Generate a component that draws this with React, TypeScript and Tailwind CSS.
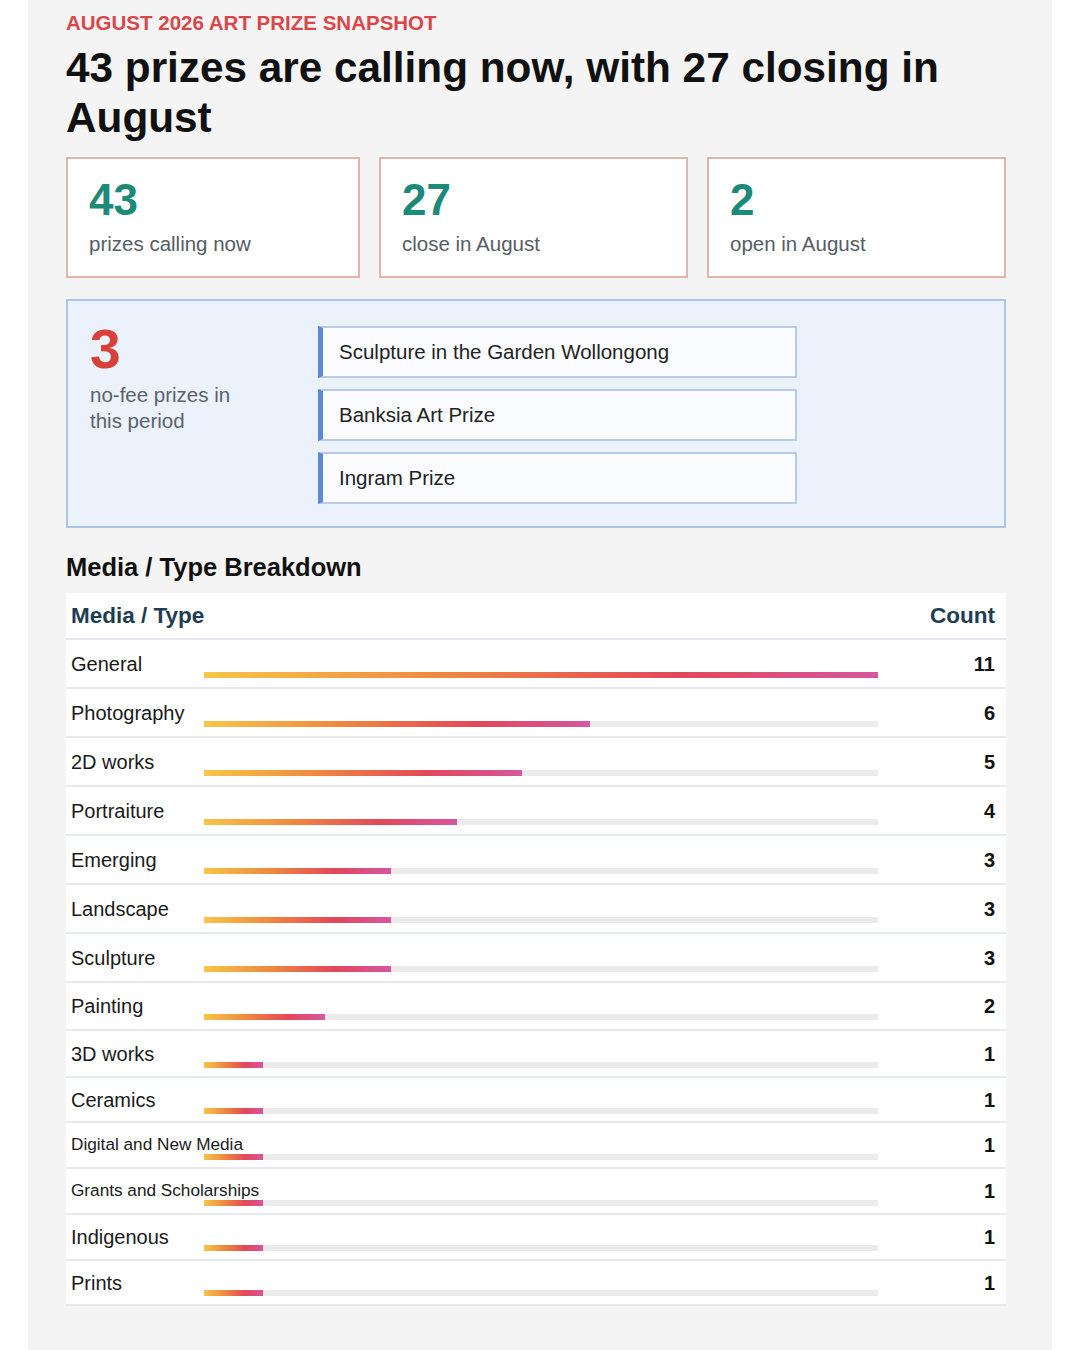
const stats = [
  { value: "43", label: "prizes calling now", width: "w-[294px]" },
  { value: "27", label: "close in August", width: "w-[309px]" },
  { value: "2", label: "open in August", width: "flex-1" },
];

const noFee = ["Sculpture in the Garden Wollongong", "Banksia Art Prize", "Ingram Prize"];

type Row = { label: string; count: number; bar: number; h: string; pb: string; small?: boolean };

const rows: Row[] = [
  { label: "General", count: 11, bar: 674, h: "h-[49px]", pb: "pb-[9px]" },
  { label: "Photography", count: 6, bar: 386, h: "h-[49px]", pb: "pb-[9px]" },
  { label: "2D works", count: 5, bar: 318, h: "h-[49px]", pb: "pb-[9px]" },
  { label: "Portraiture", count: 4, bar: 253, h: "h-[49px]", pb: "pb-[9px]" },
  { label: "Emerging", count: 3, bar: 187, h: "h-[49px]", pb: "pb-[9px]" },
  { label: "Landscape", count: 3, bar: 187, h: "h-[49px]", pb: "pb-[9px]" },
  { label: "Sculpture", count: 3, bar: 187, h: "h-[49px]", pb: "pb-[9px]" },
  { label: "Painting", count: 2, bar: 121, h: "h-[48px]", pb: "pb-[9px]" },
  { label: "3D works", count: 1, bar: 59, h: "h-[47px]", pb: "pb-[8px]" },
  { label: "Ceramics", count: 1, bar: 59, h: "h-[45px]", pb: "pb-[7px]" },
  { label: "Digital and New Media", count: 1, bar: 59, h: "h-[46px]", pb: "pb-[7px]", small: true },
  { label: "Grants and Scholarships", count: 1, bar: 59, h: "h-[46px]", pb: "pb-[7px]", small: true },
  { label: "Indigenous", count: 1, bar: 59, h: "h-[46px]", pb: "pb-[8px]" },
  { label: "Prints", count: 1, bar: 59, h: "h-[45px]", pb: "pb-[8px]" },
];

const barFill = "linear-gradient(to right, #f7c548, #f0893f 35%, #e2475a 70%, #d6579e)";

export default function App() {
  return (
    <div className="min-h-[1350px] bg-white px-[28px] font-['Liberation_Sans',Arial,sans-serif]">
      <div className="min-h-[1350px] bg-[#f4f4f4] pl-[38px] pr-[46px] pt-[11px]">
        {/* Eyebrow + title */}
        <p className="text-[20.5px] font-bold uppercase leading-[24px] text-[#d8474a]">
          August 2026 Art Prize Snapshot
        </p>
        <h1 className="mt-[8px] text-[42.3px] font-bold leading-[50px] text-[#111]">
          43 prizes are calling now, with 27 closing in August
        </h1>

        {/* Stat cards */}
        <div className="mt-[14px] flex gap-[19px]">
          {stats.map((s) => (
            <div
              key={s.value}
              className={`${s.width} h-[121px] border-2 border-[#e0b4ac] bg-white px-[21px] pt-[19px]`}
            >
              <div className="text-[44px] font-bold leading-[44px] text-[#1b8a79]">{s.value}</div>
              <div className="mt-[10px] text-[20.5px] leading-[24px] text-[#565d66]">{s.label}</div>
            </div>
          ))}
        </div>

        {/* No-fee box */}
        <div className="mt-[21px] flex h-[229px] border-2 border-[#adc4ea] bg-[#ebf2fc] pl-[22px] pt-[21px]">
          <div className="w-[228px] shrink-0">
            <div className="text-[55px] font-bold leading-[55px] text-[#d8403a]">3</div>
            <p className="mt-[5px] w-[150px] text-[20.5px] leading-[26px] text-[#5b626b]">
              no-fee prizes in this period
            </p>
          </div>
          <div className="mt-[4px] flex w-[479px] flex-col gap-[11px]">
            {noFee.map((n) => (
              <div
                key={n}
                className="flex h-[52px] items-center border-2 border-l-[5px] border-[#b9cbec] border-l-[#5b88d8] bg-[#fafcff] pl-[16px] text-[20.5px] text-[#222]"
              >
                {n}
              </div>
            ))}
          </div>
        </div>

        {/* Breakdown */}
        <h2 className="mt-[24px] text-[25.5px] font-bold leading-[30px] text-[#111]">Media / Type Breakdown</h2>
        <div className="mt-[11px] bg-white">
          <div className="flex h-[47px] items-center justify-between border-b-2 border-[#e3e8ee] pl-[5px] pr-[11px] text-[22.5px] font-bold text-[#1f3d52]">
            <span>Media / Type</span>
            <span>Count</span>
          </div>
          {rows.map((r) => (
            <div key={r.label} className={`flex ${r.h} items-center border-b-2 border-[#e6e9ee]`}>
              <div
                className={`w-[138px] shrink-0 whitespace-nowrap pl-[5px] text-[#1a1a1a] ${
                  r.small ? "text-[17.2px]" : "text-[20px]"
                }`}
              >
                {r.label}
              </div>
              <div className={`flex w-[674px] shrink-0 self-stretch items-end ${r.pb}`}>
                <div className="h-[6px] w-full bg-[#ebebeb]">
                  <div className="h-full" style={{ width: r.bar, backgroundImage: barFill }} />
                </div>
              </div>
              <div className="flex-1 pr-[11px] text-right text-[20px] font-bold text-[#111]">{r.count}</div>
            </div>
          ))}
        </div>
      </div>
    </div>
  );
}
